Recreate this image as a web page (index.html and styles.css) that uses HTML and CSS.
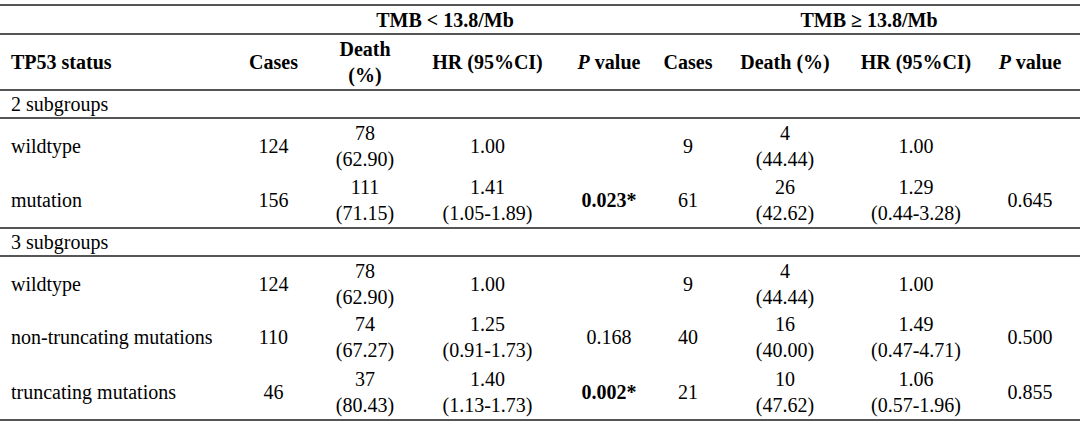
FILE: index.html
```html
<!DOCTYPE html>
<html lang="en">
<head>
<meta charset="utf-8">
<title>TP53 status by TMB</title>
<link rel="stylesheet" href="styles.css">
</head>
<body>
<table class="tbl">
  <colgroup>
    <col class="c-status">
    <col class="c-cases">
    <col class="c-death">
    <col class="c-hr">
    <col class="c-p">
    <col class="c-cases2">
    <col class="c-death2">
    <col class="c-hr2">
    <col class="c-p2">
  </colgroup>
  <thead>
    <tr class="h1">
      <th></th>
      <th colspan="4">TMB &lt; 13.8/Mb</th>
      <th colspan="4">TMB ≥ 13.8/Mb</th>
    </tr>
    <tr class="h2">
      <th class="left">TP53 status</th>
      <th>Cases</th>
      <th>Death<br>(%)</th>
      <th>HR (95%CI)</th>
      <th><i>P</i> value</th>
      <th>Cases</th>
      <th>Death (%)</th>
      <th>HR (95%CI)</th>
      <th><i>P</i> value</th>
    </tr>
  </thead>
  <tbody>
    <tr class="sub"><td class="left" colspan="9">2 subgroups</td></tr>
    <tr class="row">
      <td class="left">wildtype</td><td>124</td><td>78<br>(62.90)</td><td>1.00</td><td></td>
      <td>9</td><td>4<br>(44.44)</td><td>1.00</td><td></td>
    </tr>
    <tr class="row last">
      <td class="left">mutation</td><td>156</td><td>111<br>(71.15)</td><td>1.41<br>(1.05-1.89)</td><td class="b">0.023*</td>
      <td>61</td><td>26<br>(42.62)</td><td>1.29<br>(0.44-3.28)</td><td>0.645</td>
    </tr>
    <tr class="sub"><td class="left" colspan="9">3 subgroups</td></tr>
    <tr class="row">
      <td class="left">wildtype</td><td>124</td><td>78<br>(62.90)</td><td>1.00</td><td></td>
      <td>9</td><td>4<br>(44.44)</td><td>1.00</td><td></td>
    </tr>
    <tr class="row">
      <td class="left">non-truncating mutations</td><td>110</td><td>74<br>(67.27)</td><td>1.25<br>(0.91-1.73)</td><td>0.168</td>
      <td>40</td><td>16<br>(40.00)</td><td>1.49<br>(0.47-4.71)</td><td>0.500</td>
    </tr>
    <tr class="row last">
      <td class="left">truncating mutations</td><td>46</td><td>37<br>(80.43)</td><td>1.40<br>(1.13-1.73)</td><td class="b">0.002*</td>
      <td>21</td><td>10<br>(47.62)</td><td>1.06<br>(0.57-1.96)</td><td>0.855</td>
    </tr>
  </tbody>
</table>
</body>
</html>
```
FILE: styles.css
```css
html, body {
  margin: 0;
  padding: 0;
  background: #fff;
}
body {
  padding-top: 4px;
  font-family: "Liberation Serif", "Times New Roman", serif;
  font-size: 20px;
  color: #000;
}
.tbl {
  width: 1080px;
  table-layout: fixed;
  border-collapse: collapse;
  border-top: 2px solid #555;
}
.c-status { width: 232px; }
.c-cases { width: 83px; }
.c-death { width: 100px; }
.c-hr { width: 145px; }
.c-p { width: 98px; }
.c-cases2 { width: 60px; }
.c-death2 { width: 134px; }
.c-hr2 { width: 128px; }
.c-p2 { width: 100px; }

th, td {
  padding: 0;
  text-align: center;
  vertical-align: middle;
  line-height: 26px;
  white-space: nowrap;
}
th { font-weight: bold; }
th i { font-style: italic; }
.left {
  text-align: left;
  padding-left: 11px;
}
.h1 { height: 29px; border-bottom: 2px solid #555; }
.h2 { height: 56px; border-bottom: 2px solid #555; }
.sub { height: 28px; border-bottom: 2px solid #555; }
.row { height: 54px; }
.row.last { height: 56px; border-bottom: 2px solid #555; }
.b { font-weight: bold; }
```
